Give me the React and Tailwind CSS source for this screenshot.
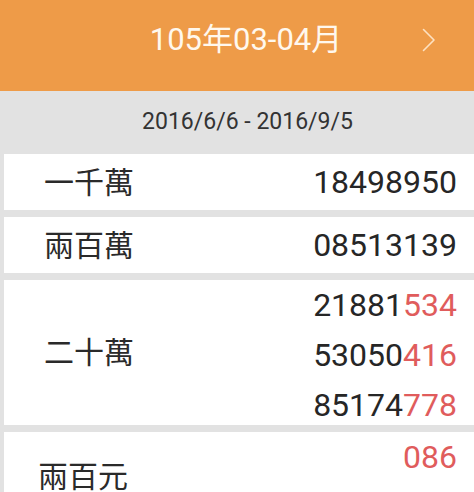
import React from 'react';

const prizes = [
  { label: '一千萬', numbers: [['18498950', '']], h: 'h-[56px]', pl: 'pl-[40px]' },
  { label: '兩百萬', numbers: [['08513139', '']], h: 'h-[56px]', pl: 'pl-[40px]' },
  {
    label: '二十萬',
    numbers: [
      ['21881', '534'],
      ['53050', '416'],
      ['85174', '778'],
    ],
    h: 'h-[145px]',
    pl: 'pl-[40px]',
  },
  { label: '兩百元', numbers: [['', '086']], h: 'h-[88px]', pl: 'pl-[34px]' },
];

function PrizeRow({ prize }) {
  const single = prize.numbers.length === 1 && prize.numbers[0][0];
  return (
    <div className={`flex shrink-0 justify-between bg-white ml-[4px] pr-[17px] ${prize.h} ${prize.pl}`}>
      <div className="self-center text-[30px] text-[#2a2a2a]">{prize.label}</div>
      <div className={`flex flex-col items-end text-[32px] ${single ? 'self-center' : 'self-start'}`}>
        {prize.numbers.map(([black, red], i) => (
          <div key={i} className="leading-[50px]">
            <span className="text-[#262626]">{black}</span>
            <span className="text-[#e05c5c]">{red}</span>
          </div>
        ))}
      </div>
    </div>
  );
}

export default function App() {
  return (
    <div
      className="w-[474px] h-[492px] overflow-hidden bg-[#e2e2e2] flex flex-col"
      style={{ fontFamily: 'Roboto, "Noto Sans CJK TC", sans-serif' }}
    >
      {/* Header */}
      <div className="h-[91px] shrink-0 bg-[#ee9b48] flex items-center pb-[11px]">
        <div className="w-[78px]" />
        <div className="flex-1 text-center text-[31px] text-[#fff8ee]">105年03-04月</div>
        <div className="w-[60px] pl-2 flex items-center">
          <svg width="14" height="24" viewBox="0 0 14 24" fill="none">
            <path d="M1.5 1.5 L12 12 L1.5 22.5" stroke="#fde2c2" strokeWidth="1.6" strokeLinecap="round" strokeLinejoin="round" />
          </svg>
        </div>
      </div>

      {/* Date range */}
      <div className="h-[63px] shrink-0 flex items-center justify-center pl-[21px] text-[23px] text-[#333]">
        2016/6/6 - 2016/9/5
      </div>

      {/* Prize list */}
      <div className="flex flex-col gap-[7px]">
        {prizes.map((p) => (
          <PrizeRow key={p.label} prize={p} />
        ))}
      </div>
    </div>
  );
}
